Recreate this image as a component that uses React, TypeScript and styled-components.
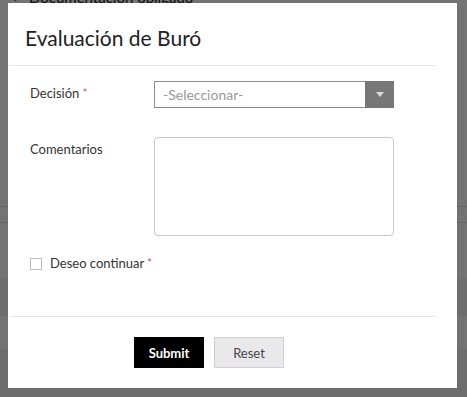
import React, { useState } from 'react';
import styled, { createGlobalStyle } from 'styled-components';

const GlobalStyle = createGlobalStyle`
  html, body {
    margin: 0;
    padding: 0;
    background: #ffffff;
    font-family: Lato, 'Open Sans', sans-serif;
    overflow: hidden;
  }
  * { box-sizing: border-box; }
`;

const BG_ROWS: { height: number; $shade: boolean; $border: boolean }[] = [
  { height: 17, $shade: false, $border: true },
  { height: 56, $shade: false, $border: false },
  { height: 37, $shade: true, $border: false },
  { height: 33, $shade: false, $border: false },
  { height: 48, $shade: true, $border: false },
];

const App: React.FC = () => {
  const [decision, setDecision] = useState('');
  const [comments, setComments] = useState('');
  const [proceed, setProceed] = useState(false);

  return (
    <>
      <GlobalStyle />
      <Page>
        <DocLine>
          <CheckMark>✔</CheckMark>
          Documentación obligado
        </DocLine>
        <PageGap />
        {BG_ROWS.map((row, i) => (
          <BgRow key={i} style={{ height: row.height }} $shade={row.$shade} $border={row.$border} />
        ))}
      </Page>
      <Overlay />
      <Modal>
        <Header>
          <Title>Evaluación de Buró</Title>
        </Header>
        <Divider />
        <Body>
          <FieldLabel>
            Decisión <Required>*</Required>
          </FieldLabel>
          <SelectWrap>
            <Select value={decision} onChange={(e) => setDecision(e.target.value)}>
              <option value="">-Seleccionar-</option>
              <option value="aprobado">Aprobado</option>
              <option value="rechazado">Rechazado</option>
            </Select>
            <SelectArrow>
              <svg width="8" height="5" viewBox="0 0 8 5">
                <path d="M0 0 L8 0 L4 5 Z" fill="#d9d9d9" />
              </svg>
            </SelectArrow>
          </SelectWrap>

          <FieldLabel>Comentarios</FieldLabel>
          <TextArea value={comments} onChange={(e) => setComments(e.target.value)} />

          <CheckRow>
            <CheckBox type="checkbox" checked={proceed} onChange={(e) => setProceed(e.target.checked)} />
            <CheckLabel>
              Deseo continuar <Required>*</Required>
            </CheckLabel>
          </CheckRow>
        </Body>
        <Divider />
        <Footer>
          <Button $primary type="button">Submit</Button>
          <Button type="button">Reset</Button>
        </Footer>
      </Modal>
    </>
  );
};

export default App;

const Page = styled.div`
  display: flex;
  flex-direction: column;
  width: 467px;
  height: 397px;
`;

const DocLine = styled.div`
  display: flex;
  align-items: center;
  gap: 6px;
  margin-top: -11px;
  padding-left: 12px;
  height: 16px;
  font-size: 15px;
  color: #222;
`;

const CheckMark = styled.span`
  color: #2f7d32;
  font-size: 13px;
`;

const PageGap = styled.div`
  height: 201px;
`;

const BgRow = styled.div<{ $shade: boolean; $border: boolean }>`
  background: ${({ $shade }) => ($shade ? '#f1f1f1' : '#ffffff')};
  border-top: ${({ $border }) => ($border ? '1px solid #e0e0e0' : 'none')};
  border-bottom: ${({ $border }) => ($border ? '1px solid #e0e0e0' : 'none')};
`;

const Overlay = styled.div`
  position: fixed;
  inset: 0;
  background: rgba(0, 0, 0, 0.55);
`;

const Modal = styled.div`
  position: fixed;
  left: 8px;
  top: 3px;
  width: 449px;
  height: 385px;
  background: #ffffff;
  display: flex;
  flex-direction: column;
`;

const Header = styled.div`
  padding: 22px 17px 15px;
`;

const Title = styled.h4`
  margin: 0;
  font-size: 21px;
  line-height: 25px;
  font-weight: 400;
  color: #222;
`;

const Divider = styled.div`
  height: 1px;
  margin: 0 22px 0 2px;
  background: #e5e5e5;
`;

const Body = styled.div`
  display: grid;
  grid-template-columns: 124px 240px;
  row-gap: 29px;
  padding: 15px 0 0 22px;
  height: 250px;
  align-content: start;
`;

const FieldLabel = styled.label`
  padding-top: 4px;
  font-size: 13px;
  line-height: 16px;
  color: #333;
`;

const Required = styled.span`
  color: #e8473f;
  font-size: 11px;
  vertical-align: top;
`;

const SelectWrap = styled.div`
  position: relative;
  height: 27px;
`;

const Select = styled.select`
  appearance: none;
  width: 100%;
  height: 27px;
  padding: 0 36px 0 8px;
  border: 1px solid #8c8c8c;
  border-radius: 0;
  background: #fff;
  font-family: Lato, sans-serif;
  font-size: 14px;
  color: #999;
  outline: none;
`;

const SelectArrow = styled.div`
  position: absolute;
  top: 0;
  right: 0;
  width: 29px;
  height: 27px;
  display: flex;
  align-items: center;
  justify-content: center;
  background: #777;
  border: 1px solid #777;
  pointer-events: none;
`;

const TextArea = styled.textarea`
  width: 240px;
  height: 99px;
  border: 1px solid #c8c8c8;
  border-radius: 4px;
  resize: none;
  font-family: Lato, sans-serif;
  font-size: 13px;
  outline: none;
  margin-bottom: -10px;
`;

const CheckRow = styled.div`
  grid-column: 1 / span 2;
  display: flex;
  align-items: center;
  gap: 8px;
`;

const CheckBox = styled.input`
  appearance: none;
  width: 12px;
  height: 12px;
  margin: 2px 0 0;
  border: 1px solid #bdbdbd;
  background: #fff;
`;

const CheckLabel = styled.label`
  font-size: 13px;
  line-height: 16px;
  color: #333;
`;

const Footer = styled.div`
  display: flex;
  gap: 10px;
  padding: 20px 0 0 126px;
`;

const Button = styled.button<{ $primary?: boolean }>`
  width: 70px;
  height: 31px;
  border: 1px solid ${({ $primary }) => ($primary ? '#000' : '#cfcfcf')};
  background: ${({ $primary }) => ($primary ? '#000' : '#e9e9eb')};
  color: ${({ $primary }) => ($primary ? '#fff' : '#444')};
  font-family: Lato, sans-serif;
  font-size: 13px;
  font-weight: ${({ $primary }) => ($primary ? 700 : 400)};
  cursor: pointer;
`;
